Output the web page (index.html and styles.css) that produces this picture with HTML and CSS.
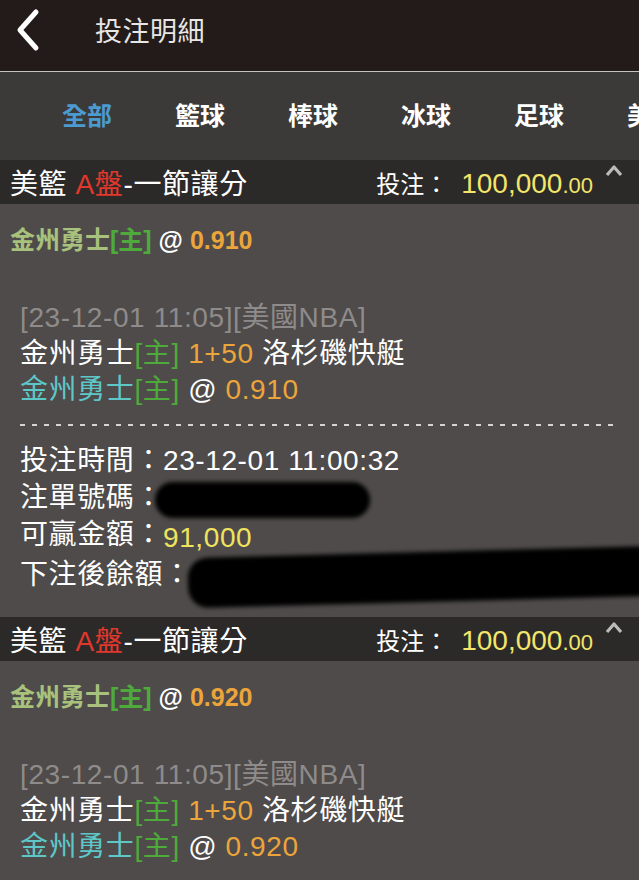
FILE: index.html
```html
<!DOCTYPE html>
<html lang="zh-Hant">
<head>
    <meta charset="UTF-8">
    <meta name="viewport" content="width=device-width, initial-scale=1.0">
    <title>投注明細</title>
    <link rel="stylesheet" href="styles.css">
</head>
<body>
    <header class="topbar">
        <svg class="back" width="26" height="44" viewBox="0 0 26 44">
            <polyline points="21,4 5,22 21,40" fill="none" stroke="#fff" stroke-width="5" stroke-linecap="round" stroke-linejoin="round"/>
        </svg>
        <h1>投注明細</h1>
    </header>

    <nav class="tabs">
        <span class="tab active">全部</span>
        <span class="tab">籃球</span>
        <span class="tab">棒球</span>
        <span class="tab">冰球</span>
        <span class="tab">足球</span>
        <span class="tab">美足</span>
    </nav>

    <!-- Premier pari -->
    <section class="bet">
        <div class="bet-head">
            <div class="bet-title">美籃 <span class="red">A盤</span>-一節讓分</div>
            <div class="bet-stake">
                <span class="stake-label">投注：</span>
                <span class="stake-amount">100,000<small>.00</small></span>
            </div>
            <svg class="collapse" width="18" height="13" viewBox="0 0 18 13">
                <polyline points="2,11 9,3 16,11" fill="none" stroke="#bdbbba" stroke-width="3.2" stroke-linejoin="round"/>
            </svg>
        </div>
        <div class="bet-body">
            <div class="pick"><span class="olive">金州勇士</span><span class="green">[主]</span> @ <span class="orange">0.910</span></div>
            <div class="detail">
                <div class="gray">[23-12-01 11:05][美國NBA]</div>
                <div>金州勇士<span class="green">[主]</span> <span class="orange">1+50</span> 洛杉磯快艇</div>
                <div><span class="cyan">金州勇士</span><span class="green">[主]</span> @ <span class="orange">0.910</span></div>
                <div class="dash"></div>
                <div class="info">
                    <div>投注時間：23-12-01 11:00:32</div>
                    <div>注單號碼：<span class="redact redact-short"></span></div>
                    <div>可贏金額：<span class="win">91,000</span></div>
                    <div>下注後餘額：<span class="redact redact-long"></span></div>
                </div>
            </div>
        </div>
    </section>

    <!-- Deuxième pari -->
    <section class="bet">
        <div class="bet-head">
            <div class="bet-title">美籃 <span class="red">A盤</span>-一節讓分</div>
            <div class="bet-stake">
                <span class="stake-label">投注：</span>
                <span class="stake-amount">100,000<small>.00</small></span>
            </div>
            <svg class="collapse" width="18" height="13" viewBox="0 0 18 13">
                <polyline points="2,11 9,3 16,11" fill="none" stroke="#bdbbba" stroke-width="3.2" stroke-linejoin="round"/>
            </svg>
        </div>
        <div class="bet-body">
            <div class="pick"><span class="olive">金州勇士</span><span class="green">[主]</span> @ <span class="orange">0.920</span></div>
            <div class="detail">
                <div class="gray">[23-12-01 11:05][美國NBA]</div>
                <div>金州勇士<span class="green">[主]</span> <span class="orange">1+50</span> 洛杉磯快艇</div>
                <div><span class="cyan">金州勇士</span><span class="green">[主]</span> @ <span class="orange">0.920</span></div>
            </div>
        </div>
    </section>
</body>
</html>
```

FILE: styles.css
```css
html {
    background-color: #4e4b4a;
}

body {
    font-family: "Liberation Sans", "Noto Sans CJK TC", sans-serif;
    margin: 0;
    width: 639px;
    overflow: hidden;
    color: #fff;
}

/* Barre du haut */
.topbar {
    height: 72px;
    box-sizing: border-box;
    background-color: #221b19;
    border-bottom: 1px solid #c4c2c0;
    display: flex;
    align-items: center;
    padding: 0 0 12px 15px;
}

.topbar h1 {
    margin: 0 0 0 54px;
    font-size: 27px;
    font-weight: normal;
    color: #e8e6e5;
    letter-spacing: 0.5px;
}

/* Onglets des sports */
.tabs {
    height: 88px;
    box-sizing: border-box;
    background-color: #3c3a39;
    display: flex;
    align-items: center;
    gap: 63px;
    padding: 0 0 4px 62px;
    white-space: nowrap;
    overflow: hidden;
}

.tab {
    font-size: 25px;
    font-weight: bold;
    flex: none;
}

.tab.active {
    color: #4b9bd1;
}

/* En-tête d'un pari */
.bet-head {
    height: 44px;
    background-color: #2b2a29;
    display: flex;
    align-items: center;
    padding: 0 16px 0 10px;
}

.bet-title {
    font-size: 28px;
    letter-spacing: 0.6px;
}

.red {
    color: #e2372c;
}

.bet-stake {
    margin-left: auto;
    display: flex;
    align-items: baseline;
}

.stake-label {
    font-size: 24px;
    margin-right: 13px;
}

.stake-amount {
    font-size: 28px;
    color: #f3e66a;
}

.stake-amount small {
    font-size: 22px;
}

.collapse {
    align-self: flex-start;
    margin: 4px 0 0 12px;
}

/* Corps d'un pari */
.bet-body {
    padding: 18px 0 24px;
}

.pick {
    padding-left: 10px;
    font-size: 25px;
    font-weight: bold;
    line-height: 36px;
}

.olive {
    color: #a8c17c;
}

.green {
    color: #4eab3b;
}

.orange {
    color: #eca53b;
}

.cyan {
    color: #5ec7c8;
}

.gray {
    color: #8e8b8a;
}

.detail {
    margin-top: 42px;
    padding: 0 19px 0 20px;
    font-size: 28px;
    line-height: 36px;
    letter-spacing: 0.6px;
    white-space: nowrap;
}

.dash {
    height: 2px;
    margin: 16px 0;
    background: repeating-linear-gradient(to right, #d6d3d2 0 5px, transparent 5px 12px);
}

.info {
    line-height: 37px;
}

.win {
    color: #f0e35e;
    vertical-align: -3px;
}

/* Zones masquées */
.redact {
    display: inline-block;
    background-color: #000;
    border-radius: 20px;
    filter: blur(2px);
    vertical-align: middle;
}

.redact-short {
    width: 215px;
    height: 36px;
    margin: -4px 0 -4px -8px;
}

.redact-long {
    width: 470px;
    height: 50px;
    margin: -10px 0 -10px -4px;
    transform: rotate(-1.5deg);
}
```
